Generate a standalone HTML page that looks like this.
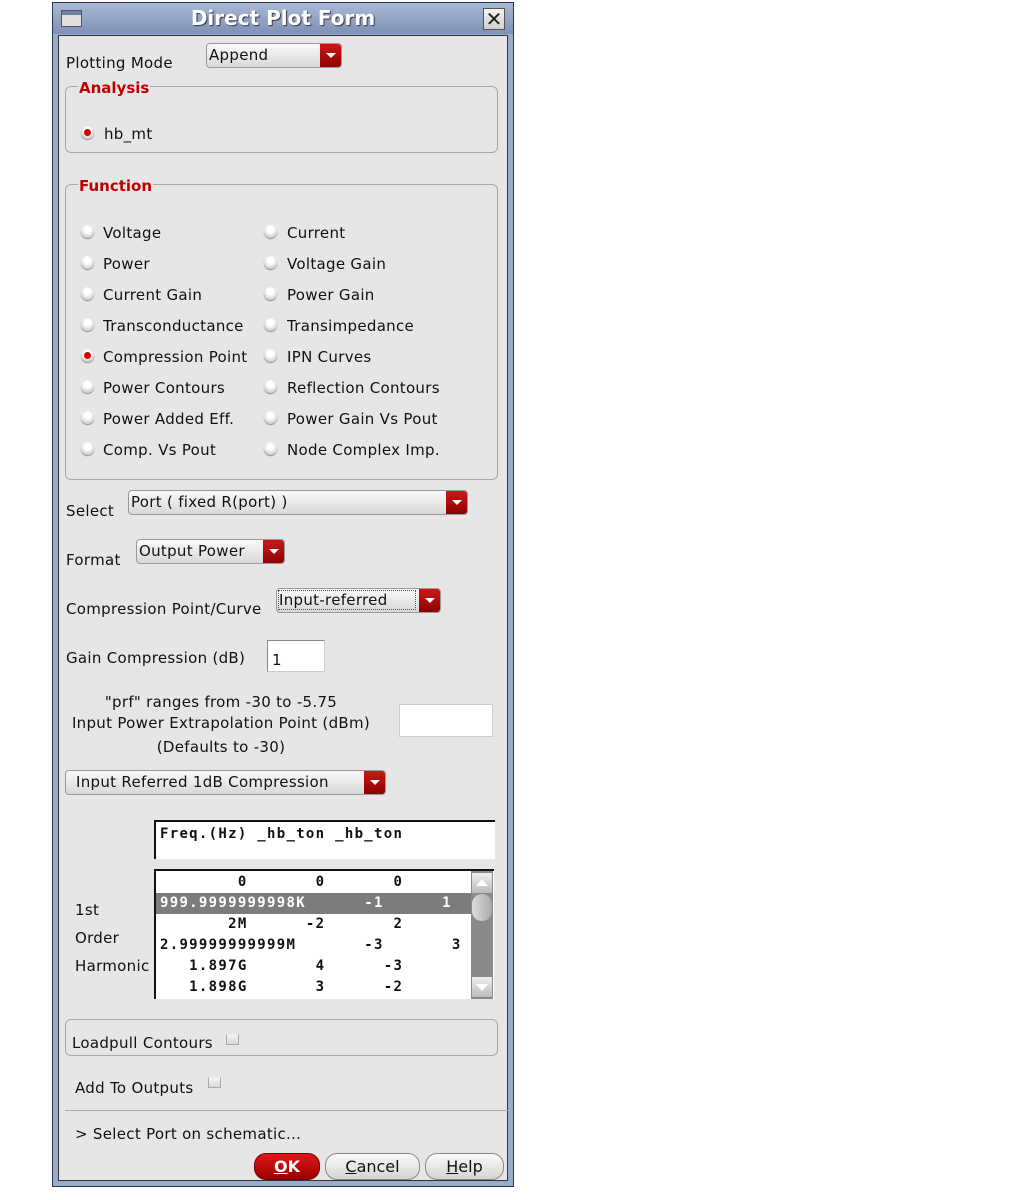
<!DOCTYPE html>
<html><head><meta charset="utf-8"><style>
*{margin:0;padding:0;box-sizing:border-box}
body{width:1015px;height:1200px;background:#fff;position:relative;overflow:hidden;font-family:"DejaVu Sans","Liberation Sans",sans-serif}
.a{position:absolute}
.t{position:absolute;font-size:15px;line-height:16px;letter-spacing:0.3px;color:#111;white-space:nowrap;margin-top:2px}
.win{left:52px;top:2px;width:462px;height:1185px;background:#9aaccb;border:1px solid #2a3550}
.title{left:53px;top:3px;width:460px;height:31px;background:linear-gradient(#a9b9d6,#7e90b4)}
.content{left:58px;top:35px;width:450px;height:1146px;background:#e6e6e6;border:1px solid #333}
.grp{position:absolute;border:1px solid #a8a8a8;border-radius:6px}
.leg{position:absolute;color:#c00000;font-weight:bold;font-size:15px;line-height:16px;background:#e6e6e6;padding:0 1px;margin-top:1px}
.dd{position:absolute;height:25px;border:1px solid #9a9a9a;border-radius:4px;background:linear-gradient(#fafafa,#d8d8d8);font-size:15px;letter-spacing:0.3px;line-height:23px;padding-left:2px;color:#111;overflow:hidden;white-space:nowrap}
.dd b{position:absolute;right:-1px;top:-1px;width:22px;height:25px;background:linear-gradient(#d01818,#8a0000);border-radius:0 4px 4px 0}
.dd b:after{content:"";position:absolute;left:6px;top:10px;border-left:5px solid transparent;border-right:5px solid transparent;border-top:5px solid #fff}
.r{position:absolute;width:13px;height:13px;border-radius:50%;background:radial-gradient(circle at 50% 35%,#fff 30%,#c8c8c8 80%);box-shadow:0 1px 1px #888}
.r.on:after{content:"";position:absolute;left:3px;top:3px;width:7px;height:7px;border-radius:50%;background:#d00000}
.cb{position:absolute;width:13px;height:11px;border:1px solid #aaa;border-top-color:#eee;background:linear-gradient(#f4f4f4,#d8d8d8)}
.in{position:absolute;background:#fff;border:1px solid #ccc;border-top-color:#888;border-left-color:#888}
.m{position:absolute;font-family:"DejaVu Sans Mono","Liberation Mono",monospace;font-size:14px;line-height:21px;letter-spacing:1.3px;white-space:pre;color:#111;font-weight:bold}
.btn{position:absolute;height:27px;border:1px solid #888;border-radius:12px;background:linear-gradient(#fbfbfb,#d4d4d4);text-align:center;font-size:16px;line-height:26px;color:#111}
</style></head><body>
<div class="a win"></div>
<div class="a title"></div>
<div class="a" style="left:61px;top:10px;width:21px;height:17px;border:1px solid #556;background:linear-gradient(#6e7e9e 0 4px,#e0e0e0 4px)"></div>
<div class="a" style="left:53px;top:7px;width:460px;text-align:center;color:#fff;font-weight:bold;font-size:20px;line-height:22px;text-shadow:1px 1px 1px #334">Direct Plot Form</div>
<div class="a" style="left:483px;top:8px;width:22px;height:22px;border:1px solid #555;background:linear-gradient(#f4f4f4,#cfcfcf);font:bold 20px/20px 'DejaVu Sans';text-align:center;color:#222">✕</div>
<div class="a content"></div>

<div class="t" style="left:66px;top:53px">Plotting Mode</div>
<div class="dd" style="left:206px;top:43px;width:136px">Append<b></b></div>

<div class="grp" style="left:65px;top:86px;width:433px;height:67px"></div>
<div class="leg" style="left:78px;top:79px">Analysis</div>
<div class="r on" style="left:81px;top:126px"></div>
<div class="t" style="left:104px;top:124px">hb_mt</div>

<div class="grp" style="left:65px;top:184px;width:433px;height:296px"></div>
<div class="leg" style="left:78px;top:177px">Function</div>

<div class="r" style="left:81px;top:225px"></div><div class="t" style="left:103px;top:223px">Voltage</div>
<div class="r" style="left:264px;top:225px"></div><div class="t" style="left:287px;top:223px">Current</div>
<div class="r" style="left:81px;top:256px"></div><div class="t" style="left:103px;top:254px">Power</div>
<div class="r" style="left:264px;top:256px"></div><div class="t" style="left:287px;top:254px">Voltage Gain</div>
<div class="r" style="left:81px;top:287px"></div><div class="t" style="left:103px;top:285px">Current Gain</div>
<div class="r" style="left:264px;top:287px"></div><div class="t" style="left:287px;top:285px">Power Gain</div>
<div class="r" style="left:81px;top:318px"></div><div class="t" style="left:103px;top:316px">Transconductance</div>
<div class="r" style="left:264px;top:318px"></div><div class="t" style="left:287px;top:316px">Transimpedance</div>
<div class="r on" style="left:81px;top:349px"></div><div class="t" style="left:103px;top:347px">Compression Point</div>
<div class="r" style="left:264px;top:349px"></div><div class="t" style="left:287px;top:347px">IPN Curves</div>
<div class="r" style="left:81px;top:380px"></div><div class="t" style="left:103px;top:378px">Power Contours</div>
<div class="r" style="left:264px;top:380px"></div><div class="t" style="left:287px;top:378px">Reflection Contours</div>
<div class="r" style="left:81px;top:411px"></div><div class="t" style="left:103px;top:409px">Power Added Eff.</div>
<div class="r" style="left:264px;top:411px"></div><div class="t" style="left:287px;top:409px">Power Gain Vs Pout</div>
<div class="r" style="left:81px;top:442px"></div><div class="t" style="left:103px;top:440px">Comp. Vs Pout</div>
<div class="r" style="left:264px;top:442px"></div><div class="t" style="left:287px;top:440px">Node Complex Imp.</div>

<div class="t" style="left:66px;top:501px">Select</div>
<div class="dd" style="left:128px;top:490px;width:340px">Port ( fixed R(port) )<b></b></div>
<div class="t" style="left:66px;top:550px">Format</div>
<div class="dd" style="left:136px;top:539px;width:149px">Output Power<b></b></div>
<div class="t" style="left:66px;top:599px">Compression Point/Curve</div>
<div class="dd" style="left:276px;top:588px;width:165px"><span style="outline:1px dotted #555;padding:0 3px 0 0;display:inline-block;line-height:18px;margin-top:1px;width:136px">Input-referred</span><b></b></div>
<div class="t" style="left:66px;top:648px">Gain Compression (dB)</div>
<div class="in" style="left:267px;top:640px;width:58px;height:32px"></div>
<div class="t" style="left:272px;top:650px">1</div>
<div class="t" style="left:56px;top:692px;width:330px;text-align:center">"prf" ranges from -30 to -5.75</div>
<div class="t" style="left:56px;top:713px;width:330px;text-align:center">Input Power Extrapolation Point (dBm)</div>
<div class="t" style="left:56px;top:737px;width:330px;text-align:center">(Defaults to -30)</div>
<div class="in" style="left:399px;top:704px;width:94px;height:33px;border-color:#ccc"></div>
<div class="dd" style="left:65px;top:770px;width:321px;padding-left:10px">Input Referred 1dB Compression<b></b></div>

<div class="a" style="left:154px;top:820px;width:341px;height:39px;background:#fff;border-top:2px solid #111;border-left:2px solid #111"></div>
<div class="m" style="left:160px;top:824px">Freq.(Hz) _hb_ton _hb_ton</div>

<div class="a" style="left:154px;top:869px;width:340px;height:130px;background:#fff;border-top:2px solid #111;border-left:2px solid #111"></div>
<div class="a" style="left:156px;top:893px;width:315px;height:21px;background:#7c7c7c"></div>
<div class="a" style="left:471px;top:871px;width:22px;height:128px;background:#8a8a8a"></div>
<div class="a" style="left:472px;top:873px;width:20px;height:20px;background:linear-gradient(#eee,#bbb)"></div>
<div class="a" style="left:476px;top:879px;border-left:6px solid transparent;border-right:6px solid transparent;border-bottom:7px solid #fff"></div>
<div class="a" style="left:472px;top:894px;width:20px;height:27px;border-radius:10px;background:linear-gradient(90deg,#ddd,#aaa)"></div>
<div class="a" style="left:472px;top:977px;width:20px;height:20px;background:linear-gradient(#eee,#bbb)"></div>
<div class="a" style="left:476px;top:984px;border-left:6px solid transparent;border-right:6px solid transparent;border-top:7px solid #fff"></div>
<div class="m" style="left:160px;top:872px">        0       0       0</div>
<div class="m" style="left:160px;top:893px;color:#fff">999.9999999998K      -1      1</div>
<div class="m" style="left:160px;top:914px">       2M      -2       2</div>
<div class="m" style="left:160px;top:935px">2.99999999999M       -3       3</div>
<div class="m" style="left:160px;top:956px">   1.897G       4      -3</div>
<div class="m" style="left:160px;top:977px">   1.898G       3      -2</div>
<div class="t" style="left:75px;top:900px">1st</div>
<div class="t" style="left:75px;top:928px">Order</div>
<div class="t" style="left:75px;top:956px">Harmonic</div>

<div class="grp" style="left:65px;top:1019px;width:433px;height:37px"></div>
<div class="t" style="left:72px;top:1033px">Loadpull Contours</div>
<div class="cb" style="left:226px;top:1034px"></div>
<div class="t" style="left:75px;top:1078px">Add To Outputs</div>
<div class="cb" style="left:208px;top:1077px"></div>
<div class="a" style="left:65px;top:1110px;width:443px;height:1px;background:#aaa"></div>
<div class="t" style="left:75px;top:1124px">&gt; Select Port on schematic...</div>

<div class="btn" style="left:254px;top:1153px;width:66px;background:linear-gradient(#e01818,#9a0000);border-color:#700;color:#fff;font-weight:bold"><u>O</u>K</div>
<div class="btn" style="left:325px;top:1153px;width:95px"><u>C</u>ancel</div>
<div class="btn" style="left:425px;top:1153px;width:79px"><u>H</u>elp</div>
</body></html>
